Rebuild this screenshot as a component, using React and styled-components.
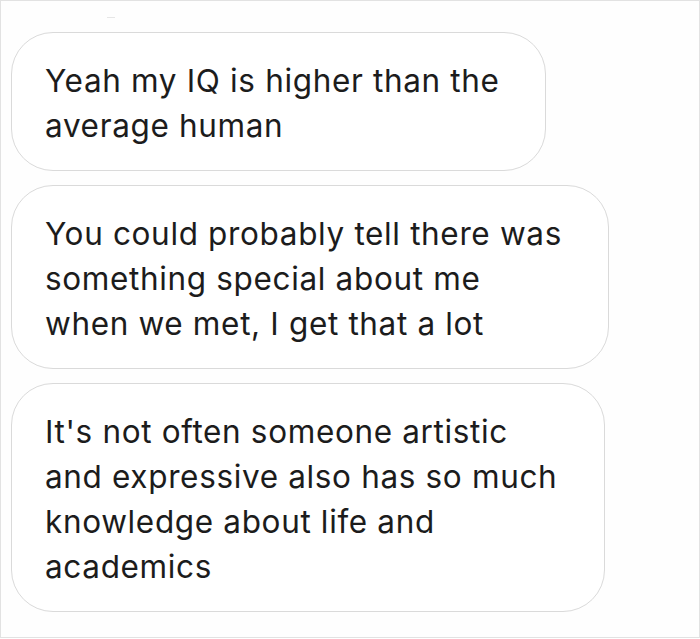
import React from 'react';
import styled, { createGlobalStyle } from 'styled-components';

const GlobalStyle = createGlobalStyle`
  html, body {
    margin: 0;
    padding: 0;
    background: #ffffff;
  }
`;

const Frame = styled('div')`
  box-sizing: border-box;
  width: 700px;
  height: 638px;
  border: 1px solid #e2e2e2;
  background: #fefefe;
  padding: 31px 0 0 10px;
  display: flex;
  flex-direction: column;
  gap: 14px;
  position: relative;
`;

const Tick = styled('div')`
  position: absolute;
  top: 16px;
  left: 106px;
  width: 8px;
  height: 1px;
  background: #e6e6e6;
`;

const Bubble = styled('div')`
  box-sizing: border-box;
  width: ${(p) => p.w}px;
  border: 1.5px solid #dadada;
  border-radius: 42px;
  background: #ffffff;
  padding: 25px 20px 22px 33px;
  font-family: Inter, 'Liberation Sans', Arial, sans-serif;
  font-size: 31.5px;
  letter-spacing: 0.65px;
  line-height: 45px;
  color: #1c1c1c;
`;

const Line = styled('span')`
  display: block;
  white-space: nowrap;
`;

const messages = [
  { w: 535, lines: ['Yeah my IQ is higher than the', 'average human'] },
  { w: 598, lines: ['You could probably tell there was', 'something special about me', 'when we met, I get that a lot'] },
  {
    w: 594,
    lines: ["It's not often someone artistic", 'and expressive also has so much', 'knowledge about life and', 'academics']
  }
];

export default function App() {
  return (
    <>
      <GlobalStyle />
      <Frame>
        <Tick />
        {messages.map((m, i) => (
          <Bubble key={i} w={m.w}>
            {m.lines.map((l, j) => (
              <Line key={j}>{l}</Line>
            ))}
          </Bubble>
        ))}
      </Frame>
    </>
  );
}
